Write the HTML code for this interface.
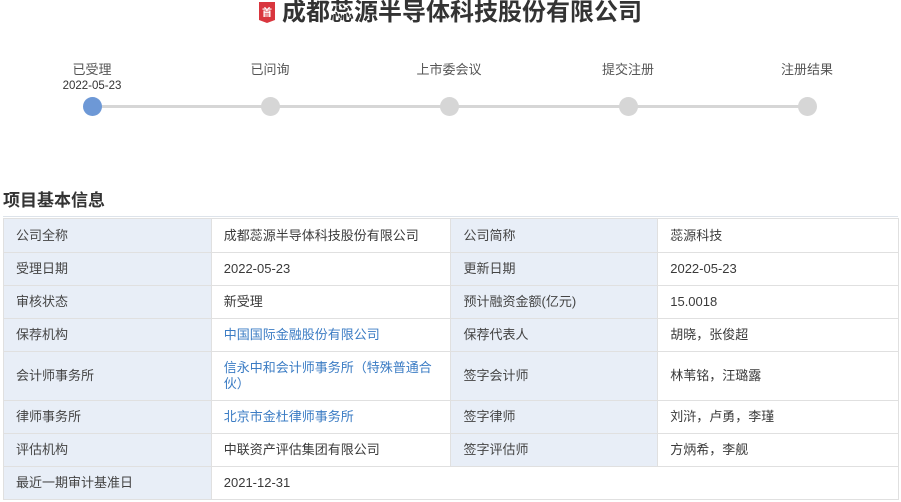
<!DOCTYPE html>
<html><head><meta charset="utf-8">
<style>
*{margin:0;padding:0;box-sizing:border-box}
body{width:901px;height:502px;background:#fff;font-family:"Liberation Sans","Noto Sans CJK SC",sans-serif;color:#333;position:relative;overflow:hidden}
.title{position:absolute;top:-1px;left:0;width:901px;text-align:center;font-size:24px;font-weight:bold;line-height:28px;color:#333}
.title svg{vertical-align:-3px;margin-right:7px}
.step{position:absolute;top:62px;width:120px;margin-left:-60px;text-align:center;font-size:13px;color:#555;line-height:16px}
.date{position:absolute;top:80px;left:32px;width:120px;text-align:center;font-size:11.5px;color:#333}
.line{position:absolute;left:92px;width:715px;top:105px;height:3px;background:#d6d6d6}
.dot{position:absolute;top:97px;width:19px;height:19px;margin-left:-9.5px;border-radius:50%;background:#d6d6d6}
h2{position:absolute;left:3px;top:186px;font-size:17px;font-weight:bold;color:#333}
.hr{position:absolute;left:3px;top:216px;width:895px;height:1px;background:#dde3ea}
table{position:absolute;left:3px;top:218px;width:896px;border-collapse:collapse;font-size:13px}
td{border:1px solid #e0e0e0;padding:0 12px;line-height:16px;color:#3a3a3a}
td.l{background:#e8eef7;color:#444}
a{color:#3b7cc4;text-decoration:none}
</style></head><body>
<div class="title"><svg width="16" height="21" viewBox="0 0 16 21"><path d="M0 0H16V18L8 21L0 18Z" fill="#d9363e"/><text x="8" y="14" font-size="10" fill="#fff" text-anchor="middle" font-family="Noto Sans CJK SC">首</text></svg>成都蕊源半导体科技股份有限公司</div>
<div class="step" style="left:92px">已受理</div>
<div class="date">2022-05-23</div>
<div class="step" style="left:270px">已问询</div>
<div class="step" style="left:449px">上市委会议</div>
<div class="step" style="left:628px">提交注册</div>
<div class="step" style="left:807px">注册结果</div>
<div class="line"></div>
<div class="dot" style="left:92px;background:#6d98d6"></div>
<div class="dot" style="left:270px"></div>
<div class="dot" style="left:449px"></div>
<div class="dot" style="left:628px"></div>
<div class="dot" style="left:807px"></div>
<h2>项目基本信息</h2>
<div class="hr"></div>
<table>
<colgroup><col style="width:208px"><col style="width:240px"><col style="width:207px"><col style="width:241px"></colgroup>
<tr style="height:34px"><td class="l">公司全称</td><td>成都蕊源半导体科技股份有限公司</td><td class="l">公司简称</td><td>蕊源科技</td></tr>
<tr style="height:33px"><td class="l">受理日期</td><td>2022-05-23</td><td class="l">更新日期</td><td>2022-05-23</td></tr>
<tr style="height:33px"><td class="l">审核状态</td><td>新受理</td><td class="l">预计融资金额(亿元)</td><td>15.0018</td></tr>
<tr style="height:33px"><td class="l">保荐机构</td><td><a>中国国际金融股份有限公司</a></td><td class="l">保荐代表人</td><td>胡晓，张俊超</td></tr>
<tr style="height:49px"><td class="l">会计师事务所</td><td><a>信永中和会计师事务所（特殊普通合伙）</a></td><td class="l">签字会计师</td><td>林苇铭，汪璐露</td></tr>
<tr style="height:33px"><td class="l">律师事务所</td><td><a>北京市金杜律师事务所</a></td><td class="l">签字律师</td><td>刘浒，卢勇，李瑾</td></tr>
<tr style="height:33px"><td class="l">评估机构</td><td>中联资产评估集团有限公司</td><td class="l">签字评估师</td><td>方炳希，李舰</td></tr>
<tr style="height:33px"><td class="l">最近一期审计基准日</td><td colspan="3">2021-12-31</td></tr>
</table>
</body></html>
